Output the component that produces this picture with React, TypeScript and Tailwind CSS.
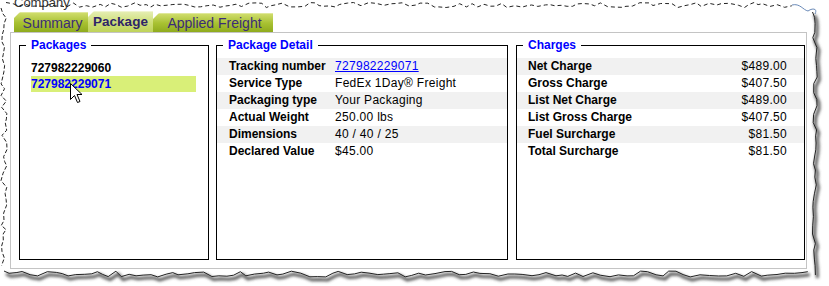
import React from "react";

const detailRows: [string, React.ReactNode][] = [
  ["Tracking number", <span className="text-[#0000ff] underline">727982229071</span>],
  ["Service Type", "FedEx 1Day® Freight"],
  ["Packaging type", "Your Packaging"],
  ["Actual Weight", "250.00 lbs"],
  ["Dimensions", "40 / 40 / 25"],
  ["Declared Value", "$45.00"],
];

const chargeRows: [string, string][] = [
  ["Net Charge", "$489.00"],
  ["Gross Charge", "$407.50"],
  ["List Net Charge", "$489.00"],
  ["List Gross Charge", "$407.50"],
  ["Fuel Surcharge", "$81.50"],
  ["Total Surcharge", "$81.50"],
];

// simple seeded random so the torn edge is stable
function rng(seed: number) {
  let s = seed;
  return () => {
    s = (s * 16807) % 2147483647;
    return (s - 1) / 2147483646;
  };
}

function edge(seed: number, from: number, to: number, base: number, amp: number, step: number, vertical: boolean) {
  const r = rng(seed);
  const pts: string[] = [];
  for (let t = from; t <= to; t += step + r() * step) {
    const off = base + (r() - 0.5) * amp;
    pts.push(vertical ? `${off.toFixed(1)},${t.toFixed(1)}` : `${t.toFixed(1)},${off.toFixed(1)}`);
  }
  return pts.join(" ");
}

function TornEdge() {
  const top = edge(7, 6, 792, 5, 5, 4, false);
  const left = edge(11, 8, 272, 4, 6, 4, true);
  const bottom = edge(23, 4, 816, 274, 6, 5, false);
  const right = edge(31, 12, 276, 815, 5, 5, true);
  return (
    <svg className="pointer-events-none absolute inset-0" width="829" height="286" viewBox="0 0 829 286">
      <defs>
        <filter id="sh" x="-5%" y="-20%" width="110%" height="140%">
          <feGaussianBlur stdDeviation="1.6" />
        </filter>
      </defs>
      <polyline points={top} fill="none" stroke="#222" strokeWidth="1" strokeDasharray="4 3" />
      <polyline points={left} fill="none" stroke="#222" strokeWidth="1" strokeDasharray="4 2" />
      <path d="M792 5 C800 3 803 10 808 11 C812 8 818 8 815 14" fill="none" stroke="#6a8ab8" strokeWidth="1" />
      <g transform="translate(2 3)" filter="url(#sh)">
        <polyline points={bottom} fill="none" stroke="#555" strokeWidth="3" />
        <polyline points={right} fill="none" stroke="#555" strokeWidth="3" />
      </g>
      <polyline points={bottom} fill="none" stroke="#222" strokeWidth="1" />
      <polyline points={right} fill="none" stroke="#222" strokeWidth="1" />
    </svg>
  );
}

function Cursor() {
  return (
    <svg className="pointer-events-none absolute left-[70px] top-[83px]" width="13" height="21" viewBox="0 0 13 21">
      <path d="M0.5 0.5 L0.5 16.5 L4.5 12.5 L7.5 19.5 L10 18.5 L7 11.5 L12 11.5 Z" fill="#fff" stroke="#000" strokeWidth="1" strokeLinejoin="miter" />
    </svg>
  );
}

function Box({ title, width, className, children }: { title: string; width: string; className?: string; children?: React.ReactNode }) {
  return (
    <fieldset className={`h-[222px] border border-black ${width} ${className ?? ""}`}>
      <legend className="ml-[6px] px-[5px] text-[12px] font-bold leading-[14px] text-[#0000ff]">{title}</legend>
      {children}
    </fieldset>
  );
}

export default function App() {
  return (
    <div className="relative h-[286px] w-[829px] overflow-hidden bg-white font-['Liberation_Sans',Arial,sans-serif] text-black">
      <span className="absolute left-[14px] top-[-7px] text-[13px] text-[#333]">Company</span>

      <div className="ml-[10px] w-[797px] pt-[11px]">
        {/* tabs */}
        <div className="flex h-[21px] items-end pl-[4px] text-[14px] leading-[16px] text-[#3b2c78]">
          <div className="flex h-[20px] w-[74px] items-center justify-center border-t border-[#dfe89a] bg-linear-to-b from-[#cfdc6a] via-[#a9c232] to-[#8fab1e] pl-[3px] [clip-path:polygon(6px_0,100%_0,100%_100%,0_100%,0_6px)]">
            Summary
          </div>
          <div className="flex h-[21px] w-[65px] items-center justify-center border-t border-[#f0f5d0] bg-linear-to-b from-[#e4edb0] via-[#cfe07a] to-[#bfd35a] text-[13.5px] font-bold text-[#2e2468] [clip-path:polygon(6px_0,100%_0,100%_100%,0_100%,0_6px)]">
            Package
          </div>
          <div className="flex h-[19px] w-[120px] items-center justify-center border-t border-[#dfe89a] bg-linear-to-b from-[#cfdc6a] via-[#a9c232] to-[#8fab1e] pl-[3px] [clip-path:polygon(6px_0,100%_0,100%_100%,0_100%,0_6px)]">
            Applied Freight
          </div>
        </div>

        {/* panel */}
        <div className="flex h-[237px] border border-[#c4c4c4] pl-[8px] pt-[5px] text-[12px]">
          <Box title="Packages" width="w-[190px]">
            <div className="ml-[11px] mt-[8px] w-[165px] font-bold leading-[16px]">
              <div className="h-[16px]">727982229060</div>
              <div className="h-[16px] bg-[#d9ef78] text-[#0000ff]">727982229071</div>
            </div>
          </Box>

          <Box title="Package Detail" width="w-[292px]" className="ml-[7px]">
            <div className="mt-[6px]">
              {detailRows.map(([label, value], i) => (
                <div key={label} className={`flex h-[17px] items-center pl-[12px] leading-[17px] ${i % 2 === 0 ? "bg-[#f1f1f1]" : ""}`}>
                  <span className="w-[106px] font-bold">{label}</span>
                  <span className="tracking-[0.3px]">{value}</span>
                </div>
              ))}
            </div>
          </Box>

          <Box title="Charges" width="w-[289px]" className="ml-[8px]">
            <div className="mt-[6px]">
              {chargeRows.map(([label, value], i) => (
                <div key={label} className={`flex h-[17px] items-center justify-between pl-[11px] pr-[17px] leading-[17px] ${i % 2 === 0 ? "bg-[#f1f1f1]" : ""}`}>
                  <span className="font-bold">{label}</span>
                  <span className="tracking-[0.3px]">{value}</span>
                </div>
              ))}
            </div>
          </Box>
        </div>
      </div>

      <Cursor />
      <TornEdge />
    </div>
  );
}
